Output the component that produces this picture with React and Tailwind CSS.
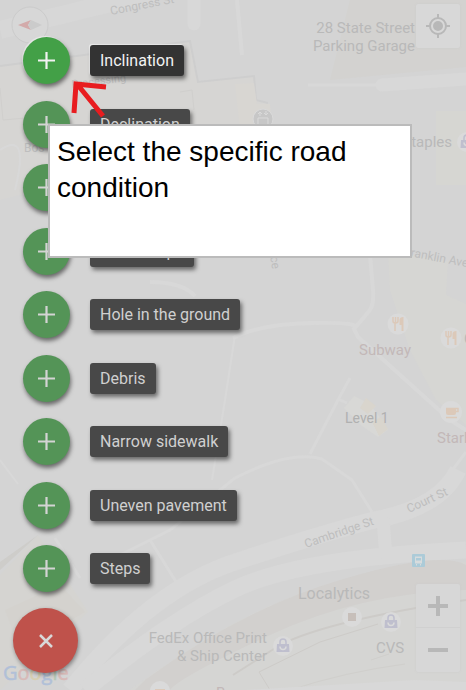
import React from "react";

const conditions = [
  { name: "Inclination", active: true },
  { name: "Declination" },
  { name: "" },
  { name: "Cross slope" },
  { name: "Hole in the ground" },
  { name: "Debris" },
  { name: "Narrow sidewalk" },
  { name: "Uneven pavement" },
  { name: "Steps" },
];

function Bag({ x, y }) {
  return (
    <g transform={`translate(${x} ${y})`}>
      <circle r="10" fill="#dadada" />
      <path d="M-6 -2H6L6.500 6h-13z" fill="#bfbfce" />
      <path d="M-3 -2v-2a3 3 0 0 1 6 0v2" fill="none" stroke="#bfbfce" strokeWidth="1.500" />
      <path d="M-3 0.500a3 3 0 0 0 6 0" fill="none" stroke="#dadada" strokeWidth="1.500" />
    </g>
  );
}

function Fork({ x, y }) {
  return (
    <g transform={`translate(${x} ${y})`}>
      <circle r="10.500" fill="#dadada" />
      <path d="M-5 -7v4q0 2 2 2v8M-2.500 -7v6M0 -7v4q0 2 -2.500 2" fill="none" stroke="#dcc9b9" strokeWidth="1.500" />
      <path d="M5.500 -7v14h-2v-6h-2v-5q0-3 4-3z" fill="#dcc9b9" />
    </g>
  );
}

function MapCanvas() {
  return (
    <svg
      viewBox="0 0 466 690"
      preserveAspectRatio="xMinYMin slice"
      className="absolute inset-0 h-full w-full font-['Roboto',sans-serif]"
      role="img"
      aria-label="Street map"
    >
      <rect width="466" height="690" fill="#d4d4d4" />

      {/* building blocks */}
      <path d="M0 66 190 41 198 82 254 76 256 100 268 102 272 130 0 200z" fill="#d6d5d3" />
      <path d="M0 66 190 41 198 82 254 76 256 100 268 103" fill="none" stroke="#cecece" strokeWidth="2" />
      <path d="M235 84 254 83 257 104 270 104 272 130 240 130z" fill="#d8d6d2" />
      <path d="M0 88 3 120 48 116M180 92l12 -2 2 20" fill="none" stroke="#d0cfcd" />
      <path d="M350 0H466V67L330 80z" fill="#d3d2d0" />
      <path d="M436 111h30v74h-30z" fill="#d6d6d2" />
      <path d="M388 250 466 265V425L436 400 410 350 390 290z" fill="#d6d6d3" />
      <path d="M448 260 446 295 466 304V264z" fill="#d4d4d4" />
      <path d="M0 575 38 535 88 612 0 690z" fill="#d5d4d1" />
      <path d="M0 570 38 535 0 562z" fill="#cecdca" />
      <path d="M5 610 60 585 85 612 20 650z" fill="#d4d2ce" />

      {/* streets */}
      <g fill="none" stroke="#d8d8d8">
        <path d="M0 30 90 8 180 -14" stroke="#d7d7d7" strokeWidth="18" />
        <path d="M194 0v24" strokeWidth="13" strokeLinecap="round" />
        <path d="M237 0 242 55" strokeWidth="4" />
        <path d="M308 85H380" strokeWidth="3" />
        <path d="M382 85 466 79" strokeWidth="13" strokeLinecap="round" />
        <path d="M150 282q32 0 45 14M233 338Q260 324 312 323T354 329L358 337 450 420 466 430M354 329 370 310Q374 304 373 290L370 255" strokeWidth="4" />
        <path d="M350 378 338 400 310 454M338 399l9 4M235 478Q290 450 322 459L352 480 372 512" strokeWidth="3" />
        <path d="M235 335 225 400 212 480M0 460l18 24M0 150q30-20 15 40" strokeWidth="2" />
        <path d="M445 480 466 452M55 538 80 578M150 540 183 593M110 560 170 530 235 478" strokeWidth="3" />
        <path d="M70 690Q150 590 235 562T374 520Q440 508 458 470" strokeWidth="17" />
        <path d="M85 690Q170 620 235 589T466 550" strokeWidth="17" />
        <path d="M383 518 386 558" strokeWidth="13" />
      </g>

      {/* railway land */}
      <path d="M130 690Q250 602 340 582T466 562V690z" fill="#d5d5d3" />
      <path d="M145 680Q240 610 340 580T466 565V590Q360 593 270 635T170 690H135z" fill="#d2d0ce" />
      <g fill="none" stroke="#cdcbc8">
        <path d="M233 675 280 645Q330 620 466 600" strokeWidth="2" />
        <path d="M259 672 320 642 378 624M259 672l11 18" strokeWidth="1" />
        <path d="M290 690Q345 672 405 664M371 660l18-6" stroke="#d0cfcc" strokeWidth="1" />
      </g>
      <path d="M245 690 415 680 466 682V690z" fill="#d8d8d8" />

      {/* points of interest */}
      <circle cx="263" cy="119" r="10" fill="#c7c7c7" stroke="#dadada" />
      <path d="M258 118h10v8h-10zM260 116v-4m-2 2 2-2 2 2M266 111v4m-2-2 2 2 2-2" fill="none" stroke="#dadada" />
      <Fork x={398} y={324} />
      <Fork x={451} y={338} />
      <path d="M344 408 354 396 370 404 382 420 388 430 378 437 362 426z" fill="#d8d8d6" />
      <path d="M366 398 376 406 368 414 360 408zM372 422l9-5 7 12-9 7z" fill="#d9d5cd" />
      <circle cx="451" cy="412" r="11" fill="#dadada" />
      <path d="M446 408h10v5q0 2-2 2h-6q-2 0-2-2z" fill="#dcc9b9" />
      <path d="M446 417.500h11M446 408.500h12v3h-3" fill="none" stroke="#dcc9b9" strokeWidth="1.500" />
      <g transform="translate(412 554)">
        <rect width="13" height="13" rx="1" fill="#accbd8" />
        <path d="M3 2.500h7v7H3zM4 9v2.500h1V9zM8 9v2.500h1V9z" fill="#d8dcdd" />
        <path d="M4 4h5v2.500H4z" fill="#accbd8" />
      </g>
      <circle cx="352" cy="617" r="10" fill="#dadada" />
      <path d="M348 613h8v8h-8z" fill="#c7bfba" />
      <Bag x={283} y={646} />
      <Bag x={391} y={622} />
      <Bag x={467} y={142} />
      <circle cx="160" cy="691" r="10" fill="#dadada" />
      <path d="M155 689h10v2h-10z" fill="#dcc9b9" />

      {/* place names */}
      <g fill="#b9b9b9" fontSize="16">
        <text x="415" y="33" fontSize="15" textAnchor="end">28 State Street</text>
        <text x="415" y="51" fontSize="15" textAnchor="end">Parking Garage</text>
        <text x="452" y="147" fontSize="15" textAnchor="end">Staples</text>
        <text x="359" y="355" fontSize="15" fill="#c3b8b8">Subway</text>
        <text x="345" y="423" fontSize="14" fill="#b0b0b0">Level 1</text>
        <text x="437" y="443" fontSize="15" fill="#c3b8b8">Starbucks</text>
        <text x="464" y="344" fontSize="15">C</text>
        <text x="298" y="599">Localytics</text>
        <text x="376" y="653" fontSize="15">CVS</text>
        <text x="267" y="643" fontSize="15" textAnchor="end">FedEx Office Print</text>
        <text x="267" y="661" fontSize="15" textAnchor="end">&amp; Ship Center</text>
        <text x="216" y="698" fontSize="15" fill="#c3b8b8">B</text>
      </g>
      <g fill="#bebebe" fontSize="12">
        <text transform="translate(111 15) rotate(-11)">Congress St</text>
        <text transform="translate(72 88) rotate(-7)" fontSize="11">Processing</text>
        <text x="24" y="152">Bos</text>
        <text transform="translate(404 255) rotate(11)">Franklin Ave</text>
        <text transform="translate(306 548) rotate(-19)">Cambridge St</text>
        <text transform="translate(409 513) rotate(-25)">Court St</text>
        <text transform="translate(268 240) rotate(82)">Place</text>
        <text transform="translate(253 234) rotate(82)">Unit</text>
      </g>

      {/* compass */}
      <circle cx="30" cy="25" r="18" fill="#d7d7d7" stroke="#cbcbcb" />
      <path d="M18 25 31 20 28 25 31 30z" fill="#d3aaaa" />
      <path d="M31 20 42 25 31 30 28 25z" fill="#cbcbcb" />

      <text x="3" y="680" fontSize="20" fontFamily="Open Sans, sans-serif" strokeWidth="0.500">
        <tspan fill="#b1c0d8" stroke="#b1c0d8">G</tspan>
        <tspan fill="#d8bab8" stroke="#d8bab8">o</tspan>
        <tspan fill="#d8cfb0" stroke="#d8cfb0">o</tspan>
        <tspan fill="#b1c0d8" stroke="#b1c0d8">g</tspan>
        <tspan fill="#b6cab8" stroke="#b6cab8">l</tspan>
        <tspan fill="#d8bab8" stroke="#d8bab8">e</tspan>
      </text>
    </svg>
  );
}

function Plus() {
  return (
    <svg viewBox="0 0 17 17" className="h-[17px] w-[17px]" aria-hidden="true">
      <path d="M8.500 0v17M0 8.500h17" stroke="currentColor" strokeWidth="2.200" />
    </svg>
  );
}

export default function App() {
  return (
    <main className="relative min-h-screen overflow-hidden bg-[#d4d4d4] font-['Roboto',sans-serif]">
      <MapCanvas />

      <button
        aria-label="My location"
        className="absolute top-1 right-1.5 flex h-11 w-11 items-center justify-center rounded-xs bg-[#d8d8d8] text-[#b8b8b8] shadow-[0_0_2px_#c8c8c8]"
      >
        <svg viewBox="0 0 24 24" className="h-6 w-6" fill="none" stroke="currentColor" strokeWidth="2" aria-hidden="true">
          <circle cx="12" cy="12" r="8" />
          <circle cx="12" cy="12" r="4" fill="currentColor" />
          <path d="M12 0v4M12 20v4M0 12h4M20 12h4" />
        </svg>
      </button>

      <div className="absolute right-1.5 bottom-[18px] flex w-11 flex-col divide-y divide-[#d0d0d0] rounded-xs bg-[#d7d7d7] text-[#b8b8b8] shadow-[0_0_2px_#c8c8c8]">
        <button aria-label="Zoom in" className="flex h-11 items-center justify-center">
          <svg viewBox="0 0 20 20" className="h-5 w-5" aria-hidden="true">
            <path d="M10 0v20M0 10h20" stroke="currentColor" strokeWidth="4" />
          </svg>
        </button>
        <button aria-label="Zoom out" className="flex h-11 items-center justify-center">
          <svg viewBox="0 0 20 20" className="h-5 w-5" aria-hidden="true">
            <path d="M0 10h20" stroke="currentColor" strokeWidth="4" />
          </svg>
        </button>
      </div>

      <nav aria-label="Road conditions" className="relative flex flex-col items-start px-[13px] pt-[37px] pb-4">
        <ul className="flex h-[555px] flex-col justify-between pl-[10px]">
          {conditions.map(({ name, active }, i) => (
            <li key={i}>
              <button aria-label={name || "Other condition"} className="flex items-center gap-5">
                <span
                  className={
                    active
                      ? "flex h-[47px] w-[47px] items-center justify-center rounded-full bg-[#43a047] text-[#f2f2f2] shadow-[1px_3px_4px_rgba(0,0,0,0.5),-1px_-1px_1px_#eeeeee]"
                      : "flex h-[47px] w-[47px] items-center justify-center rounded-full bg-[#549457] text-[#d4d4d4] shadow-[1px_3px_4px_rgba(0,0,0,0.5)]"
                  }
                >
                  <Plus />
                </span>
                {name && (
                  <span
                    className={
                      active
                        ? "rounded-[3px] bg-[#333333] px-[10px] text-base leading-[31px] whitespace-nowrap text-[#f2f2f2] shadow-[2px_3px_4px_rgba(0,0,0,0.5),-1px_-1px_1px_#eeeeee]"
                        : "rounded-[3px] bg-[#484848] px-[10px] text-base leading-[31px] whitespace-nowrap text-[#d0d0d0] shadow-[2px_3px_4px_rgba(0,0,0,0.5)]"
                    }
                  >
                    {name}
                  </span>
                )}
              </button>
            </li>
          ))}
        </ul>
        <button
          aria-label="Close"
          className="mt-4 flex h-[65px] w-[65px] items-center justify-center rounded-full bg-[#bf524b] text-[#d8d8d8] shadow-[1px_2px_4px_rgba(0,0,0,0.4)]"
        >
          <svg viewBox="0 0 14 14" className="h-[14px] w-[14px]" aria-hidden="true">
            <path d="M1 1 13 13M13 1 1 13" stroke="currentColor" strokeWidth="2.500" />
          </svg>
        </button>
      </nav>

      <svg viewBox="0 0 40 46" className="absolute top-[78px] left-[70px] h-[46px] w-10" fill="none" stroke="#e81c1f" strokeWidth="5" aria-hidden="true">
        <path d="M33 38 7 6M36 9 6 6 4 35" />
      </svg>

      <p className="absolute top-[124px] left-12 h-[134px] w-[364px] border-2 border-[#bbbbbb] bg-white px-[7px] py-2 font-['Liberation_Sans',Arial,sans-serif] text-[28px] leading-9 text-black">
        Select the specific road condition
      </p>
    </main>
  );
}
